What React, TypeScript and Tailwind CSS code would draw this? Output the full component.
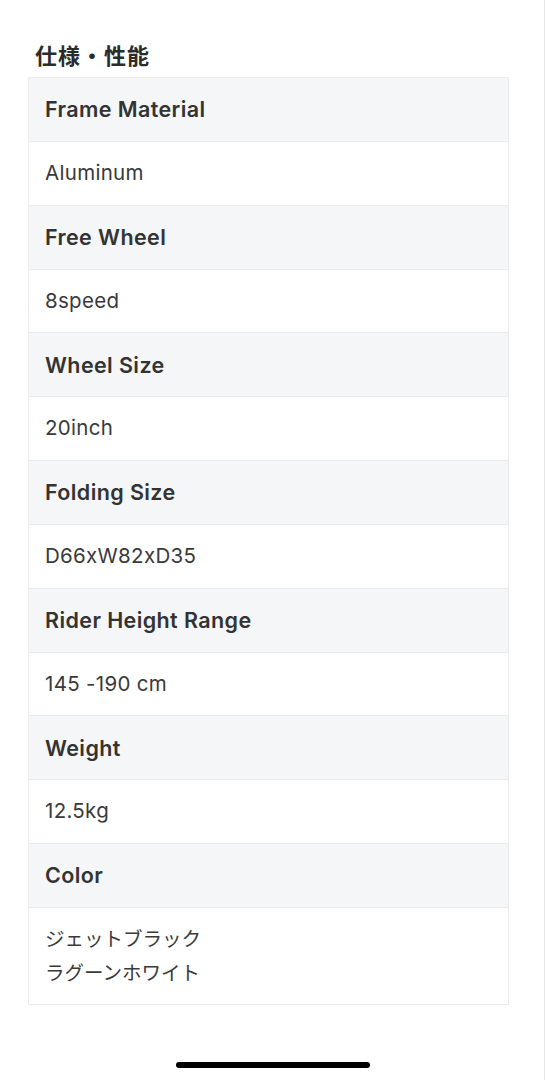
import React from "react";

const rows: [string, string[]][] = [
  ["Frame Material", ["Aluminum"]],
  ["Free Wheel", ["8speed"]],
  ["Wheel Size", ["20inch"]],
  ["Folding Size", ["D66xW82xD35"]],
  ["Rider Height Range", ["145 -190 cm"]],
  ["Weight", ["12.5kg"]],
  ["Color", ["ジェットブラック", "ラグーンホワイト"]],
];

export default function App() {
  return (
    <div
      className="w-[545px] h-[1080px] bg-white text-[#333] relative border-r border-[#e6e6e6] overflow-hidden"
      style={{ fontFamily: 'Inter, "Noto Sans CJK JP", sans-serif' }}
    >
      <div className="pt-[41px] pl-[35px] pr-[36px]">
        <h2 className="text-[22px] font-bold leading-[31px] tracking-[1px] text-[#2b2b2b]">仕様・性能</h2>
      </div>
      <div className="mx-[28px] mt-[5px] w-[481px] border border-[#ebebeb]">
        {rows.map(([label, values]) => (
          <React.Fragment key={label}>
            <div className="h-[63.85px] bg-[#f5f6f8] border-b border-[#ebebeb] flex items-center pl-[16px] text-[21.5px] tracking-[0.4px] font-semibold text-[#333]">
              {label}
            </div>
            {values.length === 1 ? (
              <div className="h-[63.85px] bg-white border-b border-[#ebebeb] flex items-center pl-[16px] text-[20.5px] tracking-[0.3px] text-[#3a3a3a]">
                {values[0]}
              </div>
            ) : (
              <div className="bg-white pl-[16px] pt-[14px] pb-[14px] text-[19.5px] leading-[34px] text-[#3a3a3a]">
                {values.map((v) => (
                  <div key={v}>{v}</div>
                ))}
              </div>
            )}
          </React.Fragment>
        ))}
      </div>
      <div className="absolute left-[176px] top-[1062px] w-[194px] h-[6px] rounded-full bg-black" />
    </div>
  );
}
